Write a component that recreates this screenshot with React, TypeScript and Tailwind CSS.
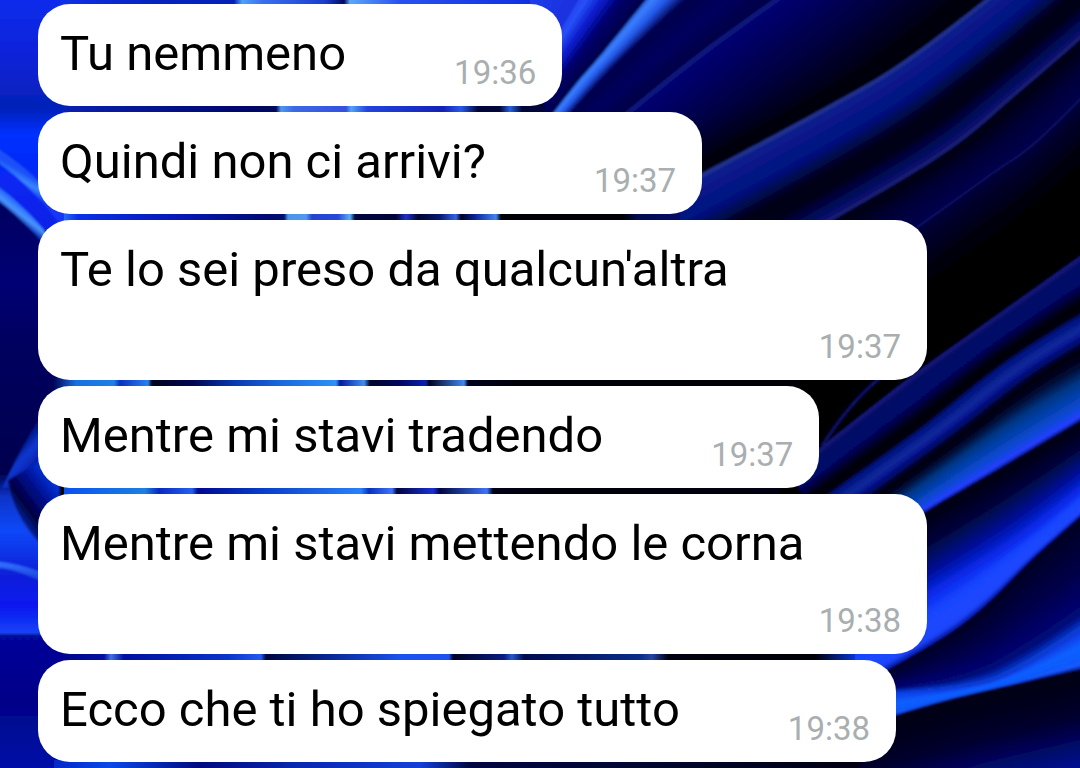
interface Message {
  text: string
  time: string
}

type Point = [number, number]
type Stop = [number, string]

interface Ribbon {
  d: string
  // gradient axis: x1, y1, x2, y2
  axis: [number, number, number, number]
  stops: Stop[]
}

interface Fold {
  from: Point[]
  to: Point[]
  stops: Stop[]
}

interface Strip {
  y: number
  // x position and colour
  stops: Stop[]
}

const messages: Message[] = [
  { text: 'Tu nemmeno', time: '19:36' },
  { text: 'Quindi non ci arrivi?', time: '19:37' },
  { text: "Te lo sei preso da qualcun'altra", time: '19:37' },
  { text: 'Mentre mi stavi tradendo', time: '19:37' },
  { text: 'Mentre mi stavi mettendo le corna', time: '19:38' },
  { text: 'Ecco che ti ho spiegato tutto', time: '19:38' },
]

export default function App() {
  return (
    <main className="relative min-h-screen overflow-hidden bg-black font-['Roboto',sans-serif]">
      <Wallpaper />
      <ul className="relative flex flex-col items-start gap-[6px] pt-1 pl-[38px]">
        {messages.map((message) => (
          <Bubble key={message.text} message={message} />
        ))}
      </ul>
    </main>
  )
}

function Bubble({ message }: { message: Message }) {
  return (
    <li className="flex max-w-[889px] flex-wrap items-end gap-x-[108px] rounded-[32px] bg-white pt-[21px] pr-[26px] pb-1 pl-[22px]">
      <p className="mb-[19px] text-[49px] leading-[58px] text-black">{message.text}</p>
      <time className="ml-auto text-[33px] leading-[58px] text-[#a9aeb0]">{message.time}</time>
    </li>
  )
}

// edges of the folds on the right, top right to bottom left
const edges: Point[][] = [
  [[530, -20], [525, 10], [515, 40], [500, 80]],
  [[662, -20], [605, 50], [575, 85], [540, 130]],
  [[708, -20], [640, 42], [600, 82], [560, 126]],
  [[800, -20], [700, 52], [625, 112], [560, 165]],
  [[1010, -20], [905, 60], [820, 110], [640, 206]],
  [[1120, 5], [1020, 92], [935, 160], [760, 262]],
  [[1120, 60], [1040, 140], [985, 180], [860, 270]],
  [[1120, 228], [990, 320], [900, 385], [790, 472]],
  [[1120, 292], [1010, 360], [920, 430], [810, 508]],
  [[1120, 328], [1040, 375], [960, 435], [860, 508]],
  [[1120, 397], [1000, 468], [925, 512], [850, 560]],
  [[1120, 458], [1025, 535], [940, 590], [840, 650]],
  [[1120, 482], [1040, 552], [960, 626], [840, 696]],
  [[1120, 604], [1020, 668], [960, 687], [850, 694]],
  [[1120, 660], [1020, 683], [940, 702], [850, 730]],
  [[1220, 760], [1120, 790], [1000, 820], [850, 860]],
]

// colours across each fold, from one edge to the next
const foldStops: Stop[][] = [
  [[0, '#2040e8'], [0.44, '#1c30e0'], [0.5, '#2a58ff'], [0.66, '#0a18c8'], [0.8, '#00006a'], [1, '#000048']],
  [[0, '#2a60d8'], [0.15, '#3a80ff'], [0.5, '#2458e8'], [1, '#00004c']],
  [[0, '#00004c'], [0.5, '#02025e'], [1, '#000046']],
  [[0, '#101c80'], [0.06, '#020670'], [0.45, '#010146'], [0.85, '#000010'], [1, '#000008']],
  [[0, '#34448c'], [0.05, '#0a1c8e'], [0.35, '#04107e'], [0.58, '#000014'], [0.7, '#000014'], [0.93, '#050a6c'], [1, '#1a2870']],
  [[0, '#00000c'], [0.5, '#010238'], [0.93, '#02044c'], [1, '#10186a']],
  [[0, '#02023a'], [0.4, '#000006'], [1, '#000004']],
  [[0, '#1a2080'], [0.12, '#060a66'], [0.45, '#040868'], [0.75, '#000010'], [0.94, '#000008'], [1, '#04107c']],
  [[0, '#04107c'], [0.4, '#0b2a9c'], [0.65, '#060f88'], [1, '#000008']],
  [[0, '#00000c'], [0.2, '#00082c'], [0.45, '#003888'], [0.78, '#0a48d0'], [0.94, '#2440ff'], [1, '#0a1a90']],
  [[0, '#00000c'], [0.4, '#00063c'], [0.75, '#0010a0'], [1, '#0a2cf0']],
  [[0, '#0a2cf0'], [0.4, '#1a48ff'], [0.85, '#1c46fc'], [1, '#0618a0']],
  [[0, '#000020'], [0.5, '#00004c'], [0.86, '#000878'], [1, '#0a48e0']],
  [[0, '#0838e0'], [0.4, '#0c60ff'], [0.9, '#1458fa'], [1, '#0a1890']],
  [[0, '#000010'], [0.35, '#00002c'], [0.8, '#0010a0'], [1, '#0014b0']],
]

const folds: Fold[] = foldStops.map((stops, i) => ({ from: edges[i], to: edges[i + 1], stops }))

// left side
const ribbons: Ribbon[] = [
  {
    d: 'M-20 -20H540V112H-20Z',
    axis: [0, 0, 0, 112],
    stops: [[0, '#0f2cec'], [0.5, '#0d22d8'], [1, '#0420b4']],
  },
  {
    d: 'M-20 106H80V230H-20Z',
    axis: [0, 106, 0, 220],
    stops: [[0, '#0420b4'], [0.25, '#0430ff'], [1, '#0a20e8']],
  },
  {
    d: 'M-20 138L0 150Q42 178 75 222H58Q30 185 0 164L-20 152Z',
    axis: [30, 176, 22, 190],
    stops: [[0, '#1a50f8'], [0.5, '#3a88ff'], [1, '#1238f4']],
  },
  {
    d: 'M-20 192H0Q30 215 60 260V480H-20Z',
    axis: [0, 200, 0, 470],
    stops: [[0, '#000660'], [0.3, '#000474'], [0.55, '#00025e'], [1, '#000450']],
  },
  {
    d: 'M-20 176L0 188Q30 210 60 250V262Q26 222 0 202L-20 190Z',
    axis: [28, 212, 20, 222],
    stops: [[0, '#2a6cff'], [0.5, '#4a96ff'], [1, '#1030b0']],
  },
  {
    d: 'M-20 474H60V640H-20Z',
    axis: [0, 474, 0, 640],
    stops: [[0, '#000450'], [0.14, '#0a34c8'], [0.34, '#0a48f8'], [0.6, '#0a20d8'], [0.8, '#0818f0'], [1, '#1a50f8']],
  },
  {
    d: 'M60 385Q30 430 2 488H24L60 450Z',
    axis: [18, 440, 42, 462],
    stops: [[0, '#000a6c'], [0.5, '#0a38d0'], [1, '#0418a0']],
  },
  {
    d: 'M8 480L60 450V560Q16 530 8 480Z',
    axis: [10, 510, 50, 480],
    stops: [[0, '#0a28b0'], [0.3, '#000440'], [0.6, '#000880'], [1, '#0430d0']],
  },
  {
    d: 'M-20 562H0Q24 564 60 580V592Q24 570 0 568H-20Z',
    axis: [0, 562, 0, 590],
    stops: [[0, '#3474ff'], [1, '#0a20c8']],
  },
  {
    d: 'M-20 634H80V800H-20Z',
    axis: [0, 634, 0, 768],
    stops: [[0, '#02079a'], [0.5, '#000488'], [1, '#0210a8']],
  },
]

// slices of the flower that show between the bubbles
const strips: Strip[] = [
  {
    y: -4,
    stops: [[60, '#1030e8'], [150, '#0424c0'], [234, '#0420b8'], [242, '#50a0f8'], [262, '#3a70f0'], [325, '#1a3cd0'], [344, '#000a60'], [350, '#5aa8f8'], [400, '#2850f0'], [530, '#1030e0']],
  },
  {
    y: 103,
    stops: [[64, '#0a20b0'], [160, '#04148c'], [236, '#000670'], [276, '#00085c'], [281, '#4c98f0'], [294, '#3c68e4'], [346, '#3450e0'], [351, '#50a4f4'], [367, '#2244e0'], [443, '#1422b4'], [461, '#2a58e8'], [478, '#00063a'], [500, '#000638'], [510, '#2a60e0'], [522, '#00063a'], [545, '#00043a']],
  },
  {
    y: 211,
    stops: [[64, '#2868f8'], [78, '#0a30e8'], [180, '#0818b4'], [271, '#000a70'], [284, '#001070'], [288, '#4c94e8'], [306, '#5098f0'], [312, '#2444d0'], [338, '#2848d8'], [350, '#5aacf8'], [355, '#000640'], [396, '#000436'], [406, '#2030c8'], [418, '#000530'], [440, '#0a1870'], [456, '#3464e8'], [461, '#000320'], [474, '#0a2090'], [496, '#4484f0'], [501, '#000006'], [622, '#000006'], [638, '#040c50'], [680, '#030c68']],
  },
  {
    y: 378,
    stops: [[54, '#000658'], [76, '#1870e0'], [114, '#1e80e4'], [120, '#0a30c0'], [148, '#2a80f0'], [152, '#00041a'], [193, '#000650'], [234, '#0838b0'], [285, '#1a6ce0'], [336, '#2e90f8'], [340, '#0818a0'], [364, '#3e90f0'], [370, '#000528'], [400, '#000660'], [426, '#0a20b0'], [429, '#00021a'], [464, '#4088f0'], [468, '#00021c'], [520, '#000008'], [800, '#000006']],
  },
  {
    y: 485,
    stops: [[64, '#0a50f0'], [145, '#1c80e0'], [159, '#0a28c0'], [192, '#2460f0'], [198, '#000890'], [260, '#083cc8'], [361, '#2a80f8'], [369, '#0a30c0'], [392, '#3e74f8'], [397, '#000440'], [433, '#1a30d8'], [440, '#000640'], [487, '#3e74f8'], [493, '#000018'], [560, '#000008'], [780, '#000012']],
  },
  {
    y: 652,
    stops: [[64, '#00068c'], [104, '#0410a0'], [111, '#4470e0'], [124, '#0010a0'], [228, '#0a34c8'], [261, '#2458f0'], [266, '#000640'], [317, '#062084'], [403, '#1a54f0'], [449, '#1e50f0'], [453, '#000424'], [504, '#0a1c80'], [512, '#2a58c8'], [524, '#000a50'], [640, '#0a2c88'], [652, '#2444a0'], [668, '#000010'], [815, '#000008'], [855, '#0a34d0']],
  },
  {
    y: 760,
    stops: [[54, '#0428c8'], [110, '#0a48e8'], [200, '#000a80'], [300, '#0a28b0'], [420, '#1440d8'], [470, '#000640'], [640, '#000830'], [860, '#000010']],
  },
]

const STEPS = 24

function mix(a: number, b: number, t: number) {
  return a + (b - a) * t
}

function colorAt(stops: Stop[], t: number) {
  const end = Math.max(1, stops.findIndex(([offset]) => offset >= t))
  const [t0, c0] = stops[end - 1]
  const [t1, c1] = stops[end]
  const k = (t - t0) / (t1 - t0)
  const channels = [1, 3, 5].map((i) =>
    Math.round(mix(parseInt(c0.slice(i, i + 2), 16), parseInt(c1.slice(i, i + 2), 16), k))
  )
  return `rgb(${channels.join(',')})`
}

// Catmull-Rom spline through the points
function spline(points: Point[]) {
  return points
    .slice(1)
    .map((p2, i) => {
      const p1 = points[i]
      const p0 = points[i - 1] ?? p1
      const p3 = points[i + 2] ?? p2
      return `C${p1[0] + (p2[0] - p0[0]) / 6} ${p1[1] + (p2[1] - p0[1]) / 6} ${p2[0] - (p3[0] - p1[0]) / 6} ${p2[1] - (p3[1] - p1[1]) / 6} ${p2[0]} ${p2[1]}`
    })
    .join('')
}

function foldPath({ from, to }: Fold, t: number) {
  const edge = from.map((p, i): Point => [mix(p[0], to[i][0], t), mix(p[1], to[i][1], t)])
  const back = [...to].reverse()
  return `M${edge[0].join(' ')}${spline(edge)}L${back[0].join(' ')}${spline(back)}Z`
}

function FoldShape({ fold }: { fold: Fold }) {
  return (
    <>
      {Array.from({ length: STEPS }, (_, i) => (
        <path key={i} d={foldPath(fold, i / STEPS)} fill={colorAt(fold.stops, (i + 0.5) / STEPS)} />
      ))}
    </>
  )
}

function Wallpaper() {
  return (
    <svg
      className="absolute inset-0 h-full w-full"
      viewBox="0 0 1080 768"
      preserveAspectRatio="xMidYMid slice"
      aria-hidden="true"
    >
      <defs>
        <filter id="soften">
          <feGaussianBlur stdDeviation="1.2" />
        </filter>
        {ribbons.map(({ axis, stops }, i) => (
          <linearGradient
            key={i}
            id={`ribbon-${i}`}
            gradientUnits="userSpaceOnUse"
            x1={axis[0]}
            y1={axis[1]}
            x2={axis[2]}
            y2={axis[3]}
          >
            {stops.map(([offset, color]) => (
              <stop key={offset} offset={offset} stopColor={color} />
            ))}
          </linearGradient>
        ))}
        {strips.map(({ stops }, i) => (
          <linearGradient key={i} id={`strip-${i}`} gradientUnits="userSpaceOnUse" x1="0" x2="1080">
            {stops.map(([x, color]) => (
              <stop key={x} offset={x / 1080} stopColor={color} />
            ))}
          </linearGradient>
        ))}
      </defs>
      <g filter="url(#soften)">
        {ribbons.map(({ d }, i) => (
          <path key={i} d={d} fill={`url(#ribbon-${i})`} />
        ))}
        {folds.map((fold, i) => (
          <FoldShape key={i} fold={fold} />
        ))}
        <path d="M880 378Q850 402 822 446" fill="none" stroke="#0a1260" strokeWidth="3" />
      </g>
      {strips.map(({ y, stops }, i) => (
        <rect
          key={i}
          x={stops[0][0]}
          y={y}
          width={stops[stops.length - 1][0] - stops[0][0]}
          height="12"
          fill={`url(#strip-${i})`}
        />
      ))}
    </svg>
  )
}
